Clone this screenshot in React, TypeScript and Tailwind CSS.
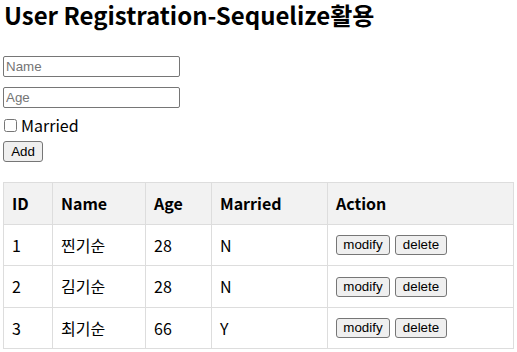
import React from "react";

const rows = [
  { id: 1, name: "찐기순", age: 28, married: "N" },
  { id: 2, name: "김기순", age: 28, married: "N" },
  { id: 3, name: "최기순", age: 66, married: "Y" },
];

const btn =
  "flex items-center justify-center border border-[#767676] rounded-[3px] bg-[#efefef] px-0 text-[13.33px] leading-[16px] text-black font-['Liberation_Sans',Arial,sans-serif]";
const inp =
  "block w-[177px] h-[21px] border border-[#767676] rounded-[2px] px-[2px] text-[13.33px] font-['Liberation_Sans',Arial,sans-serif] placeholder:text-[#757575] outline-none";

export default function App() {
  return (
    <div className="w-[517px] h-[352px] bg-white px-[3px] text-black font-['Noto_Sans_CJK_KR','Noto_Sans',sans-serif]">
      <h1 className="text-[24px] leading-[29px] font-bold pl-[1px]">User Registration-Sequelize활용</h1>
      <div className="mt-[27px] flex flex-col">
        <input className={inp} placeholder="Name" />
        <input className={`${inp} mt-[10px]`} placeholder="Age" />
        <label className="mt-[6px] flex items-center h-[22px] text-[16px] leading-[22px]">
          <input type="checkbox" className="w-[13px] h-[13px] ml-[1px] mr-[4px]" />
          Married
        </label>
        <div className="flex mt-[5px]">
          <button className={`${btn} h-[21px] w-[40px]`}>Add</button>
        </div>
      </div>
      <table className="mt-[20px] w-[511px] border-collapse text-[16px] leading-[24.5px]">
        <thead>
          <tr className="bg-[#f2f2f2]">
            <th className="border border-[#dddddd] px-[8px] py-[8px] text-left font-bold w-[49px]">ID</th>
            <th className="border border-[#dddddd] px-[8px] py-[8px] text-left font-bold w-[93px]">Name</th>
            <th className="border border-[#dddddd] px-[8px] py-[8px] text-left font-bold w-[66px]">Age</th>
            <th className="border border-[#dddddd] px-[8px] py-[8px] text-left font-bold w-[116px]">Married</th>
            <th className="border border-[#dddddd] px-[8px] py-[8px] text-left font-bold">Action</th>
          </tr>
        </thead>
        <tbody>
          {rows.map((r) => (
            <tr key={r.id}>
              <td className="border border-[#dddddd] px-[8px] py-[8px]">{r.id}</td>
              <td className="border border-[#dddddd] px-[8px] py-[8px]">{r.name}</td>
              <td className="border border-[#dddddd] px-[8px] py-[8px]">{r.age}</td>
              <td className="border border-[#dddddd] px-[8px] py-[8px]">{r.married}</td>
              <td className="border border-[#dddddd] px-[8px] py-[8px]">
                <div className="flex items-center gap-[5px] pt-[1px]">
                  <button className={`${btn} h-[20px] w-[54px]`}>modify</button>
                  <button className={`${btn} h-[20px] w-[52px]`}>delete</button>
                </div>
              </td>
            </tr>
          ))}
        </tbody>
      </table>
    </div>
  );
}
